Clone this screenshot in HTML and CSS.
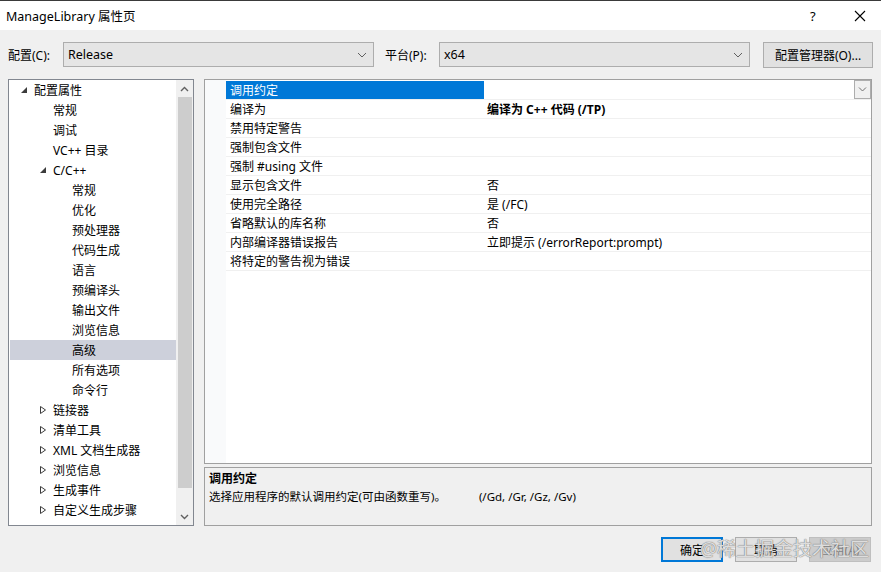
FILE: index.html
```html
<!DOCTYPE html>
<html lang="zh">
<head>
<meta charset="utf-8">
<title>ManageLibrary 属性页</title>
<link rel="stylesheet" href="styles.css">
</head>
<body>
<div class="window">
  <div class="titlebar">
    <span class="title">ManageLibrary 属性页</span>
    <span class="help">?</span>
    <svg class="close" width="12" height="12" viewBox="0 0 12 12"><path d="M1 1L11 11M11 1L1 11" stroke="#000" stroke-width="1.1" fill="none"/></svg>
  </div>

  <div class="toolbar">
    <label class="lbl lbl-cfg">配置(C):</label>
    <div class="select">
      <span>Release</span>
      <svg class="chev" width="10" height="6" viewBox="0 0 10 6"><path d="M1 1L5 5L9 1" stroke="#606060" stroke-width="1" fill="none"/></svg>
    </div>
    <label class="lbl lbl-plat">平台(P):</label>
    <div class="select">
      <span>x64</span>
      <svg class="chev" width="10" height="6" viewBox="0 0 10 6"><path d="M1 1L5 5L9 1" stroke="#606060" stroke-width="1" fill="none"/></svg>
    </div>
    <button class="btn btn-mgr">配置管理器(O)...</button>
  </div>

  <div class="main">
    <div class="tree">
      <div class="tree-list">
        <div class="trow l0"><span class="tw"><svg width="6" height="6" viewBox="0 0 6 6"><polygon points="6,0 6,6 0,6" fill="#3c3c3c"/></svg></span>配置属性</div>
        <div class="trow l1"><span class="tw"></span>常规</div>
        <div class="trow l1"><span class="tw"></span>调试</div>
        <div class="trow l1"><span class="tw"></span>VC++ 目录</div>
        <div class="trow l1"><span class="tw"><svg width="6" height="6" viewBox="0 0 6 6"><polygon points="6,0 6,6 0,6" fill="#3c3c3c"/></svg></span>C/C++</div>
        <div class="trow l2"><span class="tw"></span>常规</div>
        <div class="trow l2"><span class="tw"></span>优化</div>
        <div class="trow l2"><span class="tw"></span>预处理器</div>
        <div class="trow l2"><span class="tw"></span>代码生成</div>
        <div class="trow l2"><span class="tw"></span>语言</div>
        <div class="trow l2"><span class="tw"></span>预编译头</div>
        <div class="trow l2"><span class="tw"></span>输出文件</div>
        <div class="trow l2"><span class="tw"></span>浏览信息</div>
        <div class="trow l2 sel"><span class="tw"></span>高级</div>
        <div class="trow l2"><span class="tw"></span>所有选项</div>
        <div class="trow l2"><span class="tw"></span>命令行</div>
        <div class="trow l1"><span class="tw"><svg width="6" height="8" viewBox="0 0 6 8"><polygon points="0.5,0.5 5.5,4 0.5,7.5" fill="none" stroke="#3c3c3c" stroke-width="1"/></svg></span>链接器</div>
        <div class="trow l1"><span class="tw"><svg width="6" height="8" viewBox="0 0 6 8"><polygon points="0.5,0.5 5.5,4 0.5,7.5" fill="none" stroke="#3c3c3c" stroke-width="1"/></svg></span>清单工具</div>
        <div class="trow l1"><span class="tw"><svg width="6" height="8" viewBox="0 0 6 8"><polygon points="0.5,0.5 5.5,4 0.5,7.5" fill="none" stroke="#3c3c3c" stroke-width="1"/></svg></span>XML 文档生成器</div>
        <div class="trow l1"><span class="tw"><svg width="6" height="8" viewBox="0 0 6 8"><polygon points="0.5,0.5 5.5,4 0.5,7.5" fill="none" stroke="#3c3c3c" stroke-width="1"/></svg></span>浏览信息</div>
        <div class="trow l1"><span class="tw"><svg width="6" height="8" viewBox="0 0 6 8"><polygon points="0.5,0.5 5.5,4 0.5,7.5" fill="none" stroke="#3c3c3c" stroke-width="1"/></svg></span>生成事件</div>
        <div class="trow l1"><span class="tw"><svg width="6" height="8" viewBox="0 0 6 8"><polygon points="0.5,0.5 5.5,4 0.5,7.5" fill="none" stroke="#3c3c3c" stroke-width="1"/></svg></span>自定义生成步骤</div>
      </div>
      <div class="vscroll">
        <div class="sbtn"><svg width="9" height="6" viewBox="0 0 9 6"><path d="M1 5L4.5 1.5L8 5" stroke="#606060" stroke-width="1.4" fill="none"/></svg></div>
        <div class="track"><div class="thumb"></div></div>
        <div class="sbtn"><svg width="9" height="6" viewBox="0 0 9 6"><path d="M1 1L4.5 4.5L8 1" stroke="#606060" stroke-width="1.4" fill="none"/></svg></div>
      </div>
    </div>

    <div class="right">
      <div class="grid">
        <div class="gutter"></div>
        <div class="rows">
          <div class="prow">
            <div class="pname hl">调用约定</div>
            <div class="pval"><span></span><span class="ddbtn"><svg width="9" height="5" viewBox="0 0 9 5"><path d="M1 0.5L4.5 4L8 0.5" stroke="#707070" stroke-width="1" fill="none"/></svg></span></div>
          </div>
          <div class="prow"><div class="pname">编译为</div><div class="pval bold">编译为 C++ 代码 (/TP)</div></div>
          <div class="prow"><div class="pname">禁用特定警告</div><div class="pval"></div></div>
          <div class="prow"><div class="pname">强制包含文件</div><div class="pval"></div></div>
          <div class="prow"><div class="pname">强制 #using 文件</div><div class="pval"></div></div>
          <div class="prow"><div class="pname">显示包含文件</div><div class="pval">否</div></div>
          <div class="prow"><div class="pname">使用完全路径</div><div class="pval">是 (/FC)</div></div>
          <div class="prow"><div class="pname">省略默认的库名称</div><div class="pval">否</div></div>
          <div class="prow"><div class="pname">内部编译器错误报告</div><div class="pval">立即提示 (/errorReport:prompt)</div></div>
          <div class="prow"><div class="pname">将特定的警告视为错误</div><div class="pval"></div></div>
        </div>
      </div>
      <div class="desc">
        <div class="desc-title">调用约定</div>
        <div class="desc-text">选择应用程序的默认调用约定(可由函数重写)。<span class="desc-opts">(/Gd, /Gr, /Gz, /Gv)</span></div>
      </div>
    </div>
  </div>

  <div class="footer">
    <button class="btn fbtn default">确定</button>
    <button class="btn fbtn">取消</button>
    <button class="btn fbtn disabled">应用(A)</button>
    <span class="watermark">@稀土掘金技术社区</span>
  </div>
</div>
</body>
</html>
```

FILE: styles.css
```css
* { box-sizing: border-box; }
html, body { margin: 0; padding: 0; }
body {
  width: 881px;
  height: 572px;
  overflow: hidden;
  background: #f0f0f0;
  font-family: "Noto Sans", "Noto Sans CJK SC", sans-serif;
  font-size: 12px;
  color: #000;
}
.window { width: 881px; height: 572px; }

.titlebar {
  height: 30px;
  background: #fff;
  border-top: 1px solid #3a3a3a;
  display: flex;
  align-items: center;
  padding-left: 6px;
}
.title { flex: 1; font-size: 12.5px; }
.help { width: 12px; font-size: 13px; margin-right: 32px; }
.close { margin-right: 15px; }

.toolbar {
  height: 49px;
  display: flex;
  align-items: center;
  padding: 0 0 0 8px;
}
.lbl { flex: none; }
.lbl-cfg { width: 55px; }
.lbl-plat { width: 54px; margin-left: 11px; }
.select {
  width: 311px;
  height: 25px;
  border: 1px solid #adadad;
  background: #e5e5e5;
  display: flex;
  align-items: center;
  justify-content: space-between;
  padding: 0 6px 0 4px;
  font-size: 12.5px;
}
.btn {
  font-family: inherit;
  font-size: 12px;
  color: #000;
  background: #e1e1e1;
  border: 1px solid #adadad;
  padding: 0;
  margin: 0;
}
.btn-mgr { width: 110px; height: 26px; margin-left: 13px; }

.main {
  height: 447px;
  display: flex;
  padding-left: 8px;
  gap: 10px;
}
.tree {
  width: 186px;
  height: 447px;
  border: 1px solid #828790;
  background: #fff;
  display: flex;
}
.tree-list { flex: 1; padding-left: 1px; }
.trow {
  height: 20px;
  display: flex;
  align-items: center;
}
.trow.sel { background: #cdd0db; }
.l0 { padding-left: 10px; }
.l1 { padding-left: 29px; }
.l2 { padding-left: 48px; }
.tw { width: 14px; flex: none; display: flex; align-items: center; padding-left: 1px; }
.tw svg { display: block; }

.vscroll {
  width: 17px;
  flex: none;
  background: #f0f0f0;
  display: flex;
  flex-direction: column;
}
.sbtn { height: 17px; display: flex; align-items: center; justify-content: center; }
.track { flex: 1; }
.thumb { height: 391px; background: #cdcdcd; margin: 0 1px 0 2px; }

.right {
  width: 668px;
  display: flex;
  flex-direction: column;
  gap: 3px;
}
.grid {
  height: 385px;
  border: 1px solid #a0a0a0;
  background: #fff;
  display: flex;
}
.gutter { width: 21px; background: #f9fafb; flex: none; }
.rows { flex: 1; padding-top: 1px; }
.prow {
  height: 19px;
  display: grid;
  grid-template-columns: 258px 1fr;
  border-bottom: 1px solid #f0f0f0;
}
.pname { padding-left: 4px; display: flex; align-items: center; white-space: nowrap; }
.pname.hl { background: #0078d7; color: #fff; }
.pval { padding-left: 3px; display: flex; align-items: center; justify-content: space-between; white-space: nowrap; }
.bold { font-weight: bold; }
.ddbtn {
  width: 17px;
  height: 19px;
  margin-top: -1px;
  border: 1px solid #adadad;
  background: #f0f0f0;
  display: flex;
  align-items: center;
  justify-content: center;
}

.desc {
  flex: 1;
  border: 1px solid #a0a0a0;
  background: #f0f0f0;
  padding: 2px 4px;
}
.desc-title { font-weight: bold; height: 18px; line-height: 18px; }
.desc-text { height: 18px; line-height: 18px; font-size: 11.5px; }
.desc-opts { margin-left: 33px; }

.footer {
  position: relative;
  display: flex;
  justify-content: flex-end;
  gap: 12px;
  padding: 11px 10px 0 0;
}
.fbtn { width: 62px; height: 25px; }
.fbtn.default { border: 2px solid #0078d7; }
.fbtn.disabled { background: #cccccc; border-color: #bfbfbf; color: #838383; }
.watermark {
  position: absolute;
  left: 700px;
  top: 10px;
  font-size: 19px;
  line-height: 26px;
  color: rgba(255, 255, 255, 0.75);
  text-shadow: 0 0 1px #777, 0 0 1px #777;
  pointer-events: none;
}
```
